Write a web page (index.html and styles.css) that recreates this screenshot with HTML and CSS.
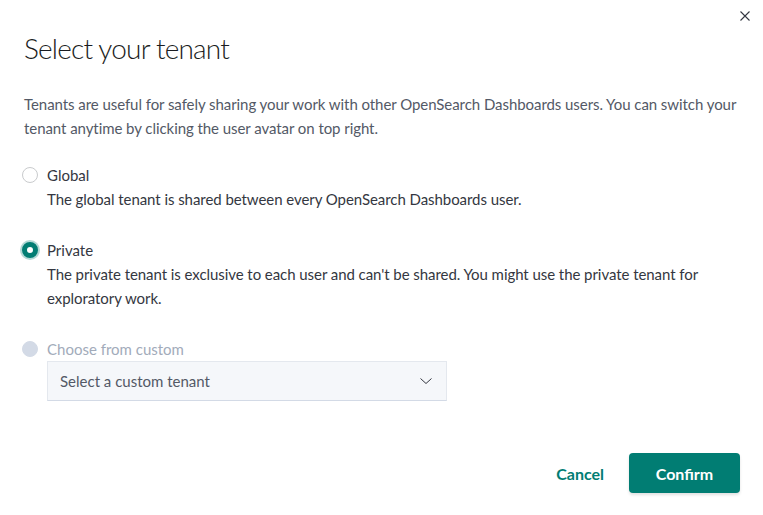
FILE: index.html
```html
<!DOCTYPE html>
<html lang="en">
<head>
<meta charset="utf-8">
<title>Select your tenant</title>
<link rel="stylesheet" href="styles.css">
</head>
<body>
<div class="modal">
  <button class="close" aria-label="Close">
    <svg width="16" height="16" viewBox="0 0 16 16"><path d="M3.5 3.5 L12.5 12.5 M12.5 3.5 L3.5 12.5" stroke="#343741" stroke-width="1.1" fill="none"/></svg>
  </button>
  <h1 class="title">Select your tenant</h1>
  <p class="intro">Tenants are useful for safely sharing your work with other OpenSearch Dashboards users. You can switch your tenant anytime by clicking the user avatar on top right.</p>

  <div class="option">
    <div class="radio-row">
      <span class="radio"></span>
      <span class="label">Global</span>
    </div>
    <p class="desc">The global tenant is shared between every OpenSearch Dashboards user.</p>
  </div>

  <div class="option">
    <div class="radio-row">
      <span class="radio checked"></span>
      <span class="label">Private</span>
    </div>
    <p class="desc">The private tenant is exclusive to each user and can't be shared. You might use the private tenant for exploratory work.</p>
  </div>

  <div class="option">
    <div class="radio-row">
      <span class="radio disabled"></span>
      <span class="label disabled-label">Choose from custom</span>
    </div>
    <div class="select">
      <span>Select a custom tenant</span>
      <svg width="16" height="16" viewBox="0 0 16 16"><path d="M2.5 5.5 L8 10.5 L13.5 5.5" stroke="#343741" stroke-width="1" fill="none"/></svg>
    </div>
  </div>

  <div class="footer">
    <button class="btn-empty">Cancel</button>
    <button class="btn-fill">Confirm</button>
  </div>
</div>
</body>
</html>
```

FILE: styles.css
```css
* { box-sizing: border-box; }
html, body { margin: 0; padding: 0; background: #ffffff; }
body {
  font-family: Lato, "Noto Sans", sans-serif;
  font-size: 16px;
  line-height: 24px;
  color: #343741;
}
.modal {
  position: relative;
  width: 763px;
  height: 515px;
  padding: 24px 22px 0 24px;
  overflow: hidden;
}
.close {
  position: absolute;
  top: 4px;
  right: 6px;
  width: 24px;
  height: 24px;
  border: 0;
  background: transparent;
  padding: 4px;
  display: flex;
  align-items: center;
  justify-content: center;
}
.title {
  margin: 0;
  font-size: 28px;
  font-weight: 300;
  line-height: 48px;
  color: #1a1c21;
  letter-spacing: -0.8px;
}
.intro {
  margin: 20px 0 0;
  color: #535966;
  font-size: 15px;
  letter-spacing: -0.06px;
}
.option { margin-top: 23px; }
.option + .option { margin-top: 27px; }
.radio-row {
  display: flex;
  align-items: center;
  gap: 9px;
  margin-left: -2px;
}
.radio {
  width: 16px;
  height: 16px;
  border-radius: 50%;
  border: 1px solid #c9cbcd;
  background: #fff;
  flex: none;
  position: relative;
}
.radio.checked {
  border: 5px solid #017d73;
  background: #fff;
  box-shadow: 0 0 0 2px rgba(1,125,115,0.3);
}
.radio.disabled {
  border-color: #d3dae6;
  background: #d3dae6;
}
.label { font-size: 15px; color: #343741; }
.disabled-label { color: #a2abba; }
.desc {
  margin: 0 0 0 23px;
  font-size: 15px;
  color: #343741;
  letter-spacing: -0.06px;
}
.select {
  margin-left: 23px;
  width: 400px;
  height: 40px;
  background: #f5f7fa;
  border: 1px solid #e4e8ee;
  border-bottom-color: #d3dae6;
  display: flex;
  align-items: center;
  justify-content: space-between;
  padding: 0 12px 0 12px;
  font-size: 15px;
  color: #535966;
}
.footer {
  display: flex;
  justify-content: flex-end;
  gap: 13px;
  margin-top: 52px;
  margin-right: 1px;
}
button { font-family: inherit; cursor: pointer; }
.btn-empty, .btn-fill {
  height: 40px;
  font-size: 16px;
  font-weight: 700;
  border-radius: 4px;
  border: 0;
}
.btn-empty {
  background: transparent;
  color: #017d73;
  padding: 0 12px;
}
.btn-fill {
  background: #017d73;
  color: #fff;
  width: 111px;
  box-shadow: 0 2px 3px rgba(0,0,0,0.12);
}
```
